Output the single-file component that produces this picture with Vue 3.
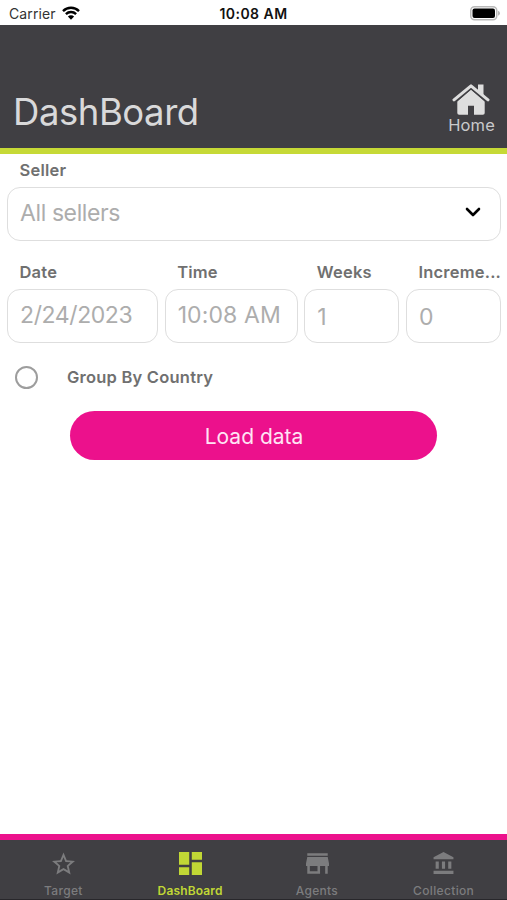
<script setup>
const fields = [
  { key: 'date', label: 'Date', value: '2/24/2023' },
  { key: 'time', label: 'Time', value: '10:08 AM' },
  { key: 'weeks', label: 'Weeks', value: '1' },
  { key: 'increment', label: 'Increme...', value: '0' },
]

const tabs = [
  {
    key: 'target',
    label: 'Target',
    box: '2 2 20 19',
    path: 'M22 9.240l-7.190-.62L12 2 9.190 8.630 2 9.240l5.460 4.730L5.820 21 12 17.270 18.180 21l-1.630-7.030L22 9.240zM12 15.400l-3.760 2.270 1-4.280-3.320-2.880 4.380-.38L12 6.100l1.710 4.040 4.380.38-3.320 2.880 1 4.280L12 15.400z',
  },
  {
    key: 'dashboard',
    label: 'DashBoard',
    active: true,
    box: '3 3 18 18',
    path: 'M3 13h8V3H3v10zm0 8h8v-6H3v6zm10 0h8V11h-8v10zm0-18v6h8V3h-8z',
  },
  {
    key: 'agents',
    label: 'Agents',
    box: '3 4 18 16',
    path: 'M20 4H4v2h16V4zm1 10v-2l-1-5H4l-1 5v2h1v6h10v-6h4v6h2v-6h1zm-9 4H6v-4h6v4z',
  },
  {
    key: 'collection',
    label: 'Collection',
    box: '2 1 19 21',
    path: 'M4 10v7h3v-7H4zm6 0v7h3v-7h-3zM2 22h19v-3H2v3zm14-12v7h3v-7h-3zm-4.500-9L2 6v2h19V6l-9.500-5z',
  },
]
</script>

<template>
  <div class="screen">
    <div class="status">
      <div class="carrier">
        <span>Carrier</span>
        <svg class="wifi" viewBox="0 0 18 14">
          <path d="M1 5.100a11.400 11.400 0 0 1 16 0" />
          <path d="M3.900 8.100a7.300 7.300 0 0 1 10.200 0" />
          <path class="dot" d="M9 13.700L5.900 10.500a4.400 4.400 0 0 1 6.200 0z" />
        </svg>
      </div>
      <span class="clock">10:08 AM</span>
      <div class="power">
        <svg class="battery" viewBox="0 0 30 15">
          <rect class="case" x=".75" y=".75" width="26" height="13" rx="3.800" />
          <rect x="2.500" y="2.500" width="22.500" height="9.500" rx="2" />
          <path class="tip" d="M28 4.800q2 .8 2 2.500t-2 2.500z" />
        </svg>
      </div>
    </div>

    <header class="header">
      <h1 class="title">DashBoard</h1>
      <div class="home">
        <svg class="house" viewBox="0 0 38 31">
          <path d="M26 .5h5.500v11L26 7z" />
          <path d="M5.300 17.300L19 5.500l13.700 11.800V29q0 1.800-1.800 1.800H22v-9h-6v9H7.100q-1.800 0-1.800-1.800z" />
          <path class="gap" d="M3 17.800L19 4.200l16 13.600" />
          <path class="roof" d="M2 15.900L19 1.800l17 14.100" />
        </svg>
        <span class="home-label">Home</span>
      </div>
    </header>

    <main class="content">
      <label class="label">Seller</label>
      <div class="box select">
        <span class="seller">All sellers</span>
        <svg class="chevron" viewBox="0 0 16 11"><path d="M2 2l6 6 6-6" /></svg>
      </div>

      <div class="row">
        <div v-for="f in fields" :key="f.key" class="field" :class="f.key">
          <label class="label">{{ f.label }}</label>
          <div class="box"><span>{{ f.value }}</span></div>
        </div>
      </div>

      <div class="group">
        <span class="radio"></span>
        <span class="group-label">Group By Country</span>
      </div>

      <button class="load">Load data</button>
    </main>

    <nav class="tabs">
      <div v-for="t in tabs" :key="t.key" class="tab" :class="[t.key, { active: t.active }]">
        <svg class="icon" :viewBox="t.box"><path :d="t.path" /></svg>
        <span class="tab-label">{{ t.label }}</span>
      </div>
    </nav>
  </div>
</template>

<style>
body {
  margin: 0;
  background: #fff;
}
</style>

<style scoped>
.screen {
  box-sizing: border-box;
  width: 507px;
  height: 900px;
  display: flex;
  flex-direction: column;
  overflow: hidden;
  background: #fff;
  font-family: Inter, 'Liberation Sans', sans-serif;
}
.status {
  height: 25px;
  display: grid;
  grid-template-columns: 1fr auto 1fr;
  align-items: center;
  color: #111;
  line-height: 20px;
  padding-top: 1px;
  box-sizing: border-box;
}
.carrier {
  display: flex;
  align-items: center;
  gap: 6px;
  padding-left: 9px;
  padding-top: 1px;
  font-size: 14px;
  color: #333;
  letter-spacing: 0.1px;
}
.wifi {
  width: 18px;
  height: 14px;
  fill: none;
  stroke: #000;
  stroke-width: 2.4;
  margin-bottom: 1px;
}
.wifi .dot {
  fill: #000;
  stroke: none;
}
.clock {
  padding-top: 1px;
  font-size: 14px;
  font-weight: 600;
  letter-spacing: 0.45px;
}
.power {
  display: flex;
  justify-content: flex-end;
  padding-right: 7px;
}
.battery {
  width: 30px;
  height: 15px;
  fill: #000;
}
.battery .case {
  fill: none;
  stroke: #b9b9b9;
  stroke-width: 1.5;
}
.battery .tip {
  fill: #b9b9b9;
}
.header {
  box-sizing: border-box;
  height: 129px;
  flex: none;
  display: flex;
  justify-content: space-between;
  align-items: flex-end;
  background: #403f43;
  border-bottom: 6px solid #c6d936;
  padding: 0 12px 13px 13px;
}
.title {
  margin: 0 0 3px;
  color: #d9d9da;
  font-size: 36.5px;
  line-height: 40px;
  font-weight: 400;
  letter-spacing: -0.45px;
}
.home {
  display: flex;
  flex-direction: column;
  align-items: center;
}
.house {
  width: 38px;
  height: 31px;
  margin-right: 1px;
  fill: #dedede;
}
.house .gap,
.house .roof {
  fill: none;
  stroke-linecap: round;
  stroke-linejoin: round;
}
.house .gap {
  stroke: #403f43;
  stroke-width: 2.4;
}
.house .roof {
  stroke: #dedede;
  stroke-width: 3;
}
.home-label {
  color: #c9c9cb;
  font-size: 16.5px;
  line-height: 20px;
  letter-spacing: 0.15px;
}
.content {
  flex: 1;
  padding: 6px 6px 0 7px;
  display: flex;
  flex-direction: column;
}
.label {
  display: block;
  padding-left: 12.5px;
  height: 27px;
  line-height: 21px;
  font-size: 16.5px;
  font-weight: 600;
  color: #707070;
  white-space: nowrap;
  letter-spacing: 0.2px;
}
.box {
  box-sizing: border-box;
  height: 54px;
  border: 1.5px solid #dedede;
  border-radius: 13px;
  padding: 0 18px 0 12px;
  display: flex;
  align-items: center;
  color: #adadad;
  font-size: 23px;
  line-height: 30px;
  font-weight: 400;
  white-space: nowrap;
}
.select {
  justify-content: space-between;
  padding: 0 19px 3px 12px;
}
.seller {
  letter-spacing: -0.4px;
}
.chevron {
  width: 16px;
  height: 11px;
  fill: none;
  stroke: #000;
  stroke-width: 2.6;
  stroke-linecap: round;
  stroke-linejoin: round;
}
.row {
  display: grid;
  grid-template-columns: 151px 133px 95px 95px;
  justify-content: space-between;
  margin-top: 21px;
}
.date .box,
.time .box {
  padding-bottom: 3px;
}
.date .box {
  letter-spacing: -0.4px;
}
.time .box {
  letter-spacing: 0.1px;
}
.weeks .box,
.increment .box {
  padding-top: 1px;
}
.group {
  display: flex;
  align-items: center;
  margin-top: 20px;
  padding-left: 8px;
  height: 28px;
}
.radio {
  box-sizing: border-box;
  width: 23px;
  height: 23px;
  border: 2px solid #9d9d9d;
  border-radius: 50%;
}
.group-label {
  margin-left: 29px;
  color: #707070;
  font-size: 16.5px;
  font-weight: 600;
  letter-spacing: 0.22px;
}
.load {
  align-self: center;
  margin: 20px 1px 0 0;
  width: 367px;
  height: 49px;
  border: 0;
  padding: 1px 0 0 1px;
  border-radius: 25px;
  background: #ec118c;
  color: #ffe3f4;
  font-family: inherit;
  font-size: 21px;
  font-weight: 400;
}
.tabs {
  box-sizing: border-box;
  flex: none;
  height: 66px;
  display: grid;
  grid-template-columns: repeat(4, 1fr);
  background: #403f43;
  border-top: 6px solid #ec118c;
  border-bottom: 1px solid #28272b;
}
.tab {
  display: grid;
  grid-template-rows: 43px 16px;
  justify-items: center;
  color: #7c7c7e;
}
.tab.active {
  color: #c1d735;
}
.icon {
  width: 23px;
  height: 23px;
  margin-top: 12px;
  fill: currentColor;
}
.target .icon,
.agents .icon {
  margin-left: 1px;
}
.collection .icon {
  height: 22px;
}
.tab-label {
  font-size: 12px;
  line-height: 16px;
  font-weight: 500;
  letter-spacing: 0.35px;
}
.agents .tab-label {
  letter-spacing: 0.3px;
}
.active .tab-label {
  font-weight: 600;
  letter-spacing: 0.15px;
}
</style>
